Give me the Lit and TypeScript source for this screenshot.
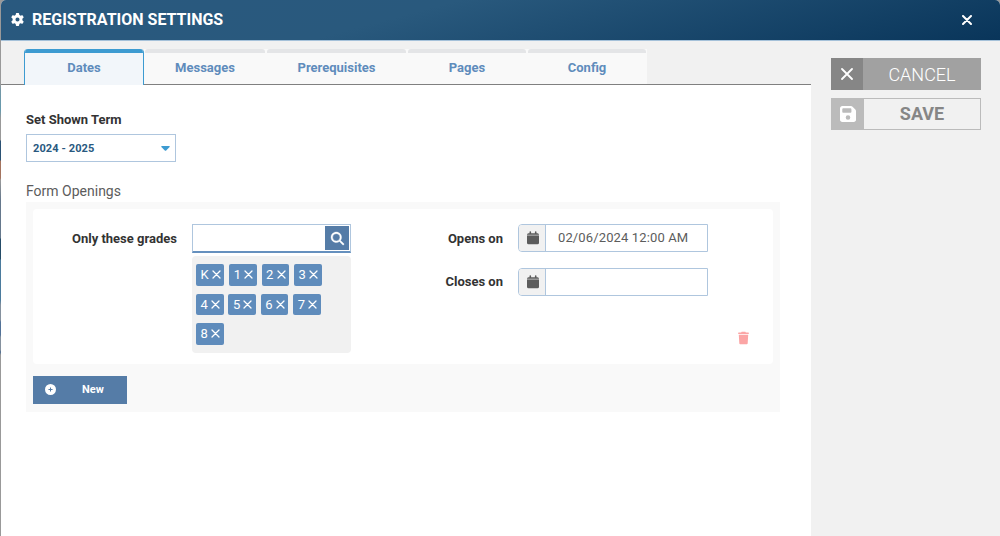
import { LitElement, html, css, svg } from "lit";
import { customElement, state } from "lit/decorators.js";

const icons = {
  gear: html`<svg class="i-gear" viewBox="0 0 512 512" fill="currentColor"><path d="M495.9 166.6c3.2 8.7.5 18.4-6.4 24.6l-43.3 39.4c1.1 8.3 1.7 16.8 1.7 25.4s-.6 17.1-1.7 25.4l43.3 39.4c6.900 6.200 9.600 15.900 6.400 24.600-4.400 11.900-9.700 23.300-15.800 34.300l-4.700 8.100c-6.600 11-14 21.400-22.100 31.200-5.900 7.200-15.700 9.600-24.500 6.800l-55.700-17.700c-13.400 10.300-28.200 18.900-44 25.400l-12.500 57.100c-2 9.100-9 16.300-18.200 17.800-13.800 2.300-28 3.500-42.500 3.500s-28.700-1.200-42.500-3.500c-9.200-1.500-16.200-8.700-18.200-17.800l-12.500-57.100c-15.800-6.500-30.600-15.100-44-25.400l-55.600 17.800c-8.800 2.800-18.600.3-24.500-6.800-8.100-9.800-15.500-20.200-22.100-31.200l-4.700-8.100c-6.100-11-11.400-22.400-15.800-34.300-3.200-8.700-.5-18.400 6.400-24.600l43.300-39.400c-1.100-8.400-1.700-16.900-1.700-25.500s.6-17.100 1.700-25.400l-43.300-39.400c-6.900-6.200-9.600-15.900-6.400-24.600 4.400-11.900 9.700-23.300 15.800-34.300l4.700-8.100c6.600-11 14-21.400 22.100-31.200 5.900-7.200 15.700-9.600 24.500-6.800l55.700 17.700c13.400-10.300 28.200-18.900 44-25.400l12.500-57.100c2-9.100 9-16.300 18.200-17.800C227.300 1.200 241.500 0 256 0s28.700 1.200 42.500 3.500c9.200 1.500 16.200 8.700 18.200 17.800l12.500 57.100c15.800 6.500 30.600 15.100 44 25.400l55.700-17.700c8.800-2.800 18.600-.3 24.500 6.800 8.100 9.800 15.500 20.200 22.100 31.200l4.700 8.100c6.100 11 11.400 22.400 15.800 34.300zM256 336a80 80 0 1 0 0-160 80 80 0 1 0 0 160z"/></svg>`,
  floppy: html`<svg class="i-floppy" viewBox="0 0 448 448" fill="currentColor"><path fill-rule="evenodd" d="M64 0C28.700 0 0 28.700 0 64v320c0 35.300 28.700 64 64 64h320c35.300 0 64-28.700 64-64V141.300c0-17-6.700-33.300-18.700-45.300L352 18.700C340 6.700 323.700 0 306.700 0H64zm0 96c0-17.700 14.300-32 32-32h192c17.700 0 32 14.300 32 32v64c0 17.700-14.300 32-32 32H96c-17.700 0-32-14.300-32-32V96zm160 160a64 64 0 1 1 0 128 64 64 0 1 1 0-128z"/></svg>`,
  search: html`<svg class="i-search" viewBox="0 0 512 512" fill="currentColor" stroke="currentColor" stroke-width="14"><path d="M416 208c0 45.900-14.900 88.300-40 122.700l126.600 126.700c12.500 12.500 12.500 32.800 0 45.300s-32.800 12.500-45.300 0L330.700 376c-34.400 25.200-76.800 40-122.700 40C93.100 416 0 322.900 0 208S93.100 0 208 0s208 93.100 208 208zM208 352a144 144 0 1 0 0-288 144 144 0 1 0 0 288z"/></svg>`,
  calendar: html`<svg class="i-cal" viewBox="0 0 12 14" fill="currentColor"><path d="M2.500 1v1.200H1.500Q0 2.200 0 3.700h12q0-1.500-1.500-1.500h-1V1q0-.8-.8-.8t-.8.8v1.200H4.100V1q0-.8-.8-.8T2.500 1z"/><path opacity=".6" d="M0 3.700h12V5H0z"/><path d="M0 5h12v6.700q0 1.500-1.500 1.500h-9Q0 13.200 0 11.700z"/></svg>`,
  trash: html`<svg class="i-trash" viewBox="0 0 448 512" fill="currentColor"><path d="M135.200 17.700 128 32H32C14.300 32 0 46.300 0 64s14.300 32 32 32h384c17.700 0 32-14.300 32-32s-14.300-32-32-32h-96l-7.200-14.300C307.400 6.800 296.300 0 284.200 0H163.800c-12.100 0-23.200 6.800-28.600 17.700zM416 128H32l21.200 339c1.600 25.300 22.600 45 47.900 45h245.800c25.300 0 46.300-19.700 47.900-45z"/></svg>`,
  plus: html`<svg class="i-plus" viewBox="0 0 512 512" fill="currentColor"><path fill-rule="evenodd" d="M256 512a256 256 0 1 0 0-512 256 256 0 1 0 0 512zM232 352v-72h-72v-48h72v-72h48v72h72v48h-72v72z"/></svg>`,
};

const cross = (size: number, weight: number) =>
  html`<svg class="i-x" width=${size} height=${size} viewBox="0 0 ${size} ${size}" fill="none" stroke="currentColor" stroke-width=${weight} stroke-linecap="round">${svg`<path d="M1 1L${size - 1} ${size - 1}M${size - 1} 1L1 ${size - 1}"/>`}</svg>`;

@customElement("app-root")
export class AppRoot extends LitElement {
  @state() private tab = "Dates";
  @state() private grades = ["K", "1", "2", "3", "4", "5", "6", "7", "8"];

  private tabs = [
    { name: "Dates", cls: "w120" },
    { name: "Messages", cls: "w123" },
    { name: "Prerequisites", cls: "w141" },
    { name: "Pages", cls: "w120b" },
    { name: "Config", cls: "w119" },
  ];

  static styles = css`
    :host {
      display: block;
      width: 1000px;
      height: 536px;
      overflow: hidden;
      box-sizing: border-box;
      padding-left: 1px;
      font-family: Roboto, sans-serif;
      color: #333;
      background: linear-gradient(#999 0 84px, #7397a6 90px, #659aae 110px, #999 118px 140px, #2b5274 141px 160px, #a4745f 161px 178px, #9a9a9a 180px, #65788c 200px, #65788c 238px, #254c68 239px 259px, #4b7b9d 260px 300px, #85919e 305px 320px, #527298 322px 335px, #85919e 337px 350px, #4b6b91 352px, #999 355px);
    }
    * { box-sizing: border-box; }
    svg { display: block; flex: none; }
    .dialog { height: 536px; display: flex; flex-direction: column; background: #fff; border-radius: 5px 5px 0 0; overflow: hidden; }
    header {
      height: 41px; flex: none; display: flex; align-items: center; justify-content: space-between;
      padding: 0 28.500px 1px 10px; color: #fff; border-bottom: 1px solid #a5c1d9;
      background: linear-gradient(165deg, #29597f 0%, #29597d 40%, #09355a 100%);
    }
    .title { display: flex; align-items: center; gap: 8px; font-size: 16px; font-weight: 700; line-height: 20px; }
    .i-gear { width: 13px; height: 13px; }
    .body { flex: 1; display: flex; min-height: 0; }
    main { width: 810px; display: flex; flex-direction: column; }
    .tabs { height: 44px; flex: none; padding: 8px 0 0 23px; display: flex; background: #f1f1f1; border-bottom: 1px solid #808080; }
    .tab { height: 35px; flex: none; background: #f9f9f9; font-size: 13px; font-weight: 700; line-height: 15px; color: #5f8cbc; text-align: center; padding-right: 2px; }
    .tab::before { content: ""; display: block; height: 4px; background: #e4e5e7; border-radius: 3px 3px 0 0; margin-bottom: 7px; }
    .tab.active { height: 36px; padding: 0; background: #f2f6fa; border: 1px solid #3d9bd1; border-top: 0; border-bottom: 0; border-radius: 4px 4px 0 0; overflow: hidden; }
    .tab.active::before { background: #3d9bd1; border-radius: 0; }
    .w120 { width: 120px; }
    .w123 { width: 123px; padding-left: 1px; }
    .w141 { width: 141px; }
    .w120b { width: 120px; }
    .w119 { width: 119px; padding-right: 1px; }
    .content { padding: 27px 31px 0 25px; }
    .label { font-size: 13px; font-weight: 700; line-height: 16px; }
    .select { margin-top: 6px; width: 150px; height: 28px; border: 1px solid #afc6de; padding: 0 5px 0 6px; display: flex; align-items: center; justify-content: space-between; font-size: 11px; font-weight: 700; color: #29597f; letter-spacing: .1px; }
    .i-caret { width: 9px; height: 5px; color: #3d9bd1; }
    .section { margin-top: 21px; height: 16px; font-size: 14px; line-height: 17px; color: #5c5c5c; }
    .openings { margin-top: 3px; width: 754px; height: 210px; background: #f9f9f9; padding: 7px; }
    .card { height: 155px; background: #fff; border-radius: 4px; display: flex; padding: 15px 24px 0 0; }
    .left-label { width: 144px; text-align: right; }
    .picker { width: 159px; margin-left: 15px; }
    .search { height: 29px; border: 1px solid #afc6de; border-bottom: 2px solid #6590be; display: flex; justify-content: flex-end; padding: 1px; }
    .search-btn { width: 24px; height: 24px; background: #557ca7; color: #fff; display: grid; place-items: center; }
    .i-search { width: 13px; height: 13px; overflow: visible; }
    .chips { margin-top: 3px; height: 97px; background: #f1f1f1; border-radius: 4px; padding: 8px 24px 0 4px; display: flex; flex-wrap: wrap; align-content: flex-start; gap: 8px 4.800px; }
    .chip { width: 27.600px; height: 21.500px; background: #5f8cbc; border-radius: 2px; color: #fff; font-size: 13px; line-height: 21px; display: flex; align-items: center; justify-content: space-between; padding: 0 3.500px 0 4.500px; }
    .chip:first-child { width: 28.400px; }
    .dates { width: 152px; text-align: right; display: flex; flex-direction: column; gap: 14px; }
    .dates .label, .left-label { line-height: 29px; }
    .fields { margin-left: 15px; display: flex; flex-direction: column; gap: 16px; }
    .field { width: 190px; height: 28px; border: 1px solid #afc6de; border-radius: 4px 0 0 4px; display: flex; overflow: hidden; }
    .addon { width: 27px; background: #f1f1f1; border-right: 1px solid #afc6de; color: #5c5c5c; padding: 0 0 0 1px; display: grid; place-items: center; }
    .i-cal { width: 12px; height: 14px; }
    .value { padding-left: 12px; font-size: 13px; line-height: 26px; color: #5c5c5c; letter-spacing: .13px; }
    .remove { margin: 107px 0 0 auto; color: #fba5a5; height: 14px; }
    .i-trash { width: 11px; height: 14px; }
    .new { margin-top: 12px; width: 94px; height: 28px; background: #557ca7; color: #fff; display: flex; align-items: center; padding: 0 0 2px 12px; font-size: 11px; font-weight: 700; }
    .i-plus { width: 11px; height: 11px; }
    .new span { margin-left: 26px; }
    aside { flex: 1; background: #f1f1f1; padding: 17px 0 0 20px; }
    .btn { width: 150px; height: 32px; display: flex; font-size: 18px; line-height: 33px; text-align: center; }
    .btn .ico { width: 32px; display: grid; place-items: center; }
    .btn .txt { flex: 1; }
    .cancel { background: #a1a1a1; color: #fff; font-weight: 300; }
    .cancel .ico { background: #868686; }
    .save { margin-top: 8px; border: 1px solid #bbb; color: #868686; font-weight: 700; line-height: 30px; }
    .save .ico { background: #bbb; color: #fff; }
    .i-floppy { width: 16px; height: 16px; }
  `;

  private removeGrade(g: string) {
    this.grades = this.grades.filter((x) => x !== g);
  }

  render() {
    return html`<div class="dialog">
      <header>
        <div class="title">${icons.gear}<span>REGISTRATION SETTINGS</span></div>
        ${cross(10, 2)}
      </header>
      <div class="body">
        <main>
          <nav class="tabs">
            ${this.tabs.map((t) => html`<div class="tab ${t.cls} ${t.name === this.tab ? "active" : ""}" @click=${() => (this.tab = t.name)}>${t.name}</div>`)}
          </nav>
          <div class="content">
            <div class="label">Set Shown Term</div>
            <div class="select"><span>2024 - 2025</span><svg class="i-caret" viewBox="0 0 9 5" fill="currentColor"><path d="M.8 0h7.400q1 0 .4 1L5.200 4.500q-.7.700-1.400 0L.4 1Q-.2 0 .8 0z"/></svg></div>
            <div class="section">Form Openings</div>
            <div class="openings">
              <div class="card">
                <div class="label left-label">Only these grades</div>
                <div class="picker">
                  <div class="search"><div class="search-btn">${icons.search}</div></div>
                  <div class="chips">
                    ${this.grades.map((g) => html`<div class="chip" @click=${() => this.removeGrade(g)}><span>${g}</span>${cross(9, 1.3)}</div>`)}
                  </div>
                </div>
                <div class="dates"><div class="label">Opens on</div><div class="label">Closes on</div></div>
                <div class="fields">
                  <div class="field"><div class="addon">${icons.calendar}</div><div class="value">02/06/2024 12:00 AM</div></div>
                  <div class="field"><div class="addon">${icons.calendar}</div></div>
                </div>
                <div class="remove">${icons.trash}</div>
              </div>
              <div class="new">${icons.plus}<span>New</span></div>
            </div>
          </div>
        </main>
        <aside>
          <div class="btn cancel"><div class="ico">${cross(12, 1.8)}</div><div class="txt">CANCEL</div></div>
          <div class="btn save"><div class="ico">${icons.floppy}</div><div class="txt">SAVE</div></div>
        </aside>
      </div>
    </div>`;
  }
}
